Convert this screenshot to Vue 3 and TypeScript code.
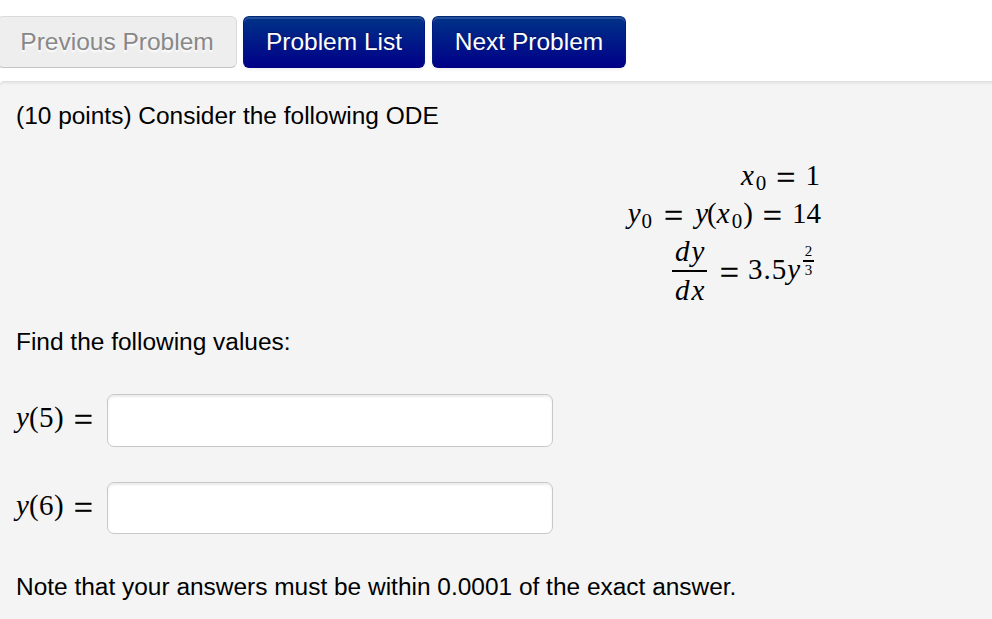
<script setup lang="ts">
import { reactive } from 'vue'

interface Answer {
  at: number
  value: string
}

const answers = reactive<Answer[]>([
  { at: 5, value: '' },
  { at: 6, value: '' }
])
</script>

<template>
  <nav class="problem-nav">
    <button class="btn previous" disabled>Previous Problem</button>
    <button class="btn primary list">Problem List</button>
    <button class="btn primary next">Next Problem</button>
  </nav>
  <main class="problem">
    <p class="intro">(10 points) Consider the following ODE</p>
    <div class="equations">
      <div class="row first">
        <i>x</i><sub>0</sub><span class="eq">=</span><span class="value">1</span>
      </div>
      <div class="row second">
        <i>y</i><sub>0</sub><span class="eq">=</span><i class="fn">y</i
        ><span class="paren">(</span><i>x</i><sub>0</sub><span class="paren">)</span
        ><span class="eq">=</span><span>14</span>
      </div>
      <div class="row third">
        <span class="frac"><i>dy</i><i class="denominator">dx</i></span>
        <span class="eq">=</span><span class="coef">3.5</span><i class="base">y</i>
        <span class="exponent"><span>2</span><span class="lower">3</span></span>
      </div>
    </div>
    <p class="find">Find the following values:</p>
    <form class="answers" @submit.prevent>
      <label v-for="answer in answers" :key="answer.at" class="answer">
        <span class="label"
          ><i>y</i><span class="paren">(</span><span class="arg">{{ answer.at }}</span
          ><span class="paren">)</span><span class="eq">=</span></span
        >
        <input v-model="answer.value" type="text" />
      </label>
    </form>
    <p class="note">Note that your answers must be within 0.0001 of the exact answer.</p>
  </main>
</template>

<style>
body {
  background: #fff;
  overflow: hidden;
}
</style>

<style scoped>
.problem-nav {
  display: flex;
  height: 81px;
  padding-top: 16px;
  box-sizing: border-box;
  margin-left: -3px;
}

.btn {
  height: 52px;
  box-sizing: border-box;
  padding: 0;
  border: 1px solid #ccc;
  border-color: #dadada #dadada #c5c5c5;
  border-radius: 6px;
  font: 24.5px 'Liberation Sans', Arial, sans-serif;
  white-space: nowrap;
}

.previous {
  width: 240px;
  background: #eee;
  color: #888;
  text-shadow: 0 2px 2px #fff;
}

.primary {
  margin-left: 6px;
  border-color: #002878 #001a80 #000080;
  background: linear-gradient(#003388, #000088);
  box-shadow:
    inset 0 2px 0 rgba(255, 255, 255, 0.15),
    0 2px 3px rgba(0, 0, 0, 0.06);
  color: #fff;
  text-shadow: 0 -1px 1px rgba(0, 0, 0, 0.3);
}

.list {
  width: 182px;
}

.next {
  width: 194px;
  margin-left: 7px;
}

.problem {
  height: 538px;
  padding: 20px 16px 0;
  box-sizing: border-box;
  border-top: 1px solid #dfdfdf;
  border-radius: 4px 0 0;
  background: #f4f4f4;
  box-shadow: inset 0 3px 2px -1px rgba(0, 0, 0, 0.05);
  color: #000;
  font: 24.46px/28px 'Liberation Sans', Arial, sans-serif;
}

p {
  margin: 0;
  white-space: nowrap;
}

.equations {
  height: 198px;
  padding: 26px 0 0;
  box-sizing: border-box;
}

.row,
.label {
  display: flex;
  align-items: baseline;
  font: 29px/38px 'Liberation Serif', 'Times New Roman', serif;
}

.row {
  height: 38px;
  justify-content: flex-end;
  padding-right: 156px;
}

.second {
  padding-right: 155px;
}

sub {
  position: relative;
  top: 5px;
  margin-left: 2px;
  font-size: 21px;
  line-height: 1;
  vertical-align: baseline;
}

.second sub:nth-of-type(1) {
  margin: 0 2px 0 1px;
}

sub + .paren {
  margin-left: 1px;
}

.fn {
  margin-left: 2px;
  margin-right: -1px;
}

.eq {
  position: relative;
  top: 4px;
  margin: 0 10px;
  font-size: 34px;
  line-height: 1;
  -webkit-text-stroke: 0.3px #000;
}

.third {
  height: 78px;
  align-items: center;
}

.frac {
  display: flex;
  flex-direction: column;
  width: 35px;
  margin-right: 3px;
  padding-left: 3px;
  box-sizing: border-box;
  text-align: center;
  line-height: 37px;
  letter-spacing: 2px;
}

.third .eq {
  top: 2px;
  margin-right: 9px;
}

.coef,
.base {
  margin-top: -4px;
}

.coef {
  letter-spacing: 1px;
}

.denominator {
  margin-left: -3px;
  padding-left: 3px;
  border-top: 2px solid #000;
}

.exponent {
  display: flex;
  flex-direction: column;
  width: 11px;
  margin: -20px 6px 0 3px;
  font-size: 15px;
  line-height: 17px;
  text-align: center;
}

.lower {
  border-top: 2px solid #000;
}

.find {
  margin-bottom: 38px;
}

.answer {
  display: flex;
  height: 52px;
  margin-bottom: 36px;
}

.label {
  width: 91px;
  line-height: 46px;
}

.arg {
  margin: 0 0.5px;
}

input {
  width: 446px;
  height: 52px;
  padding: 0 12px;
  box-sizing: border-box;
  border: 1px solid #c8c8c8;
  border-radius: 7px;
  outline: none;
  background: #fff;
  box-shadow: inset 0 2px 2px rgba(0, 0, 0, 0.075);
  font: 24.5px 'Liberation Sans', Arial, sans-serif;
}

.answer:first-child input {
  height: 53px;
}

.note {
  padding-top: 3px;
}
</style>
